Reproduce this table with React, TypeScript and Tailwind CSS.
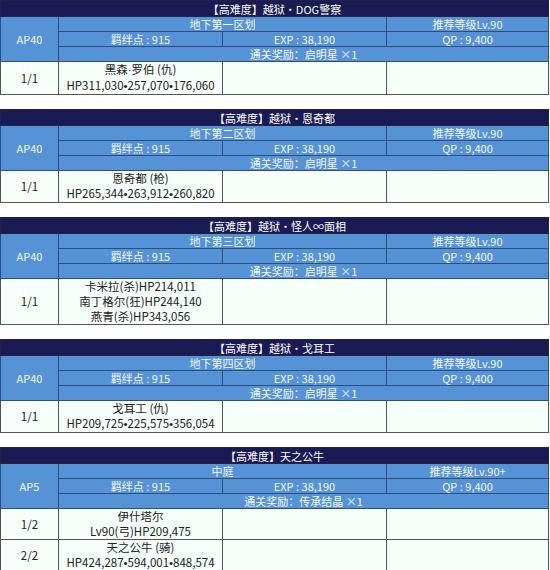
import React from 'react';

type Row = { no: string; lines: string[] };
type Quest = {
  title: string;
  ap: string;
  area: string;
  level: string;
  reward: string;
  rows: Row[];
};

const quests: Quest[] = [
  {
    title: '【高难度】越狱・DOG警察',
    ap: 'AP40',
    area: '地下第一区划',
    level: '推荐等级Lv.90',
    reward: '通关奖励：启明星 ×1',
    rows: [{ no: '1/1', lines: ['黑森·罗伯 (仇)', 'HP311,030•257,070•176,060'] }],
  },
  {
    title: '【高难度】越狱・恩奇都',
    ap: 'AP40',
    area: '地下第二区划',
    level: '推荐等级Lv.90',
    reward: '通关奖励：启明星 ×1',
    rows: [{ no: '1/1', lines: ['恩奇都 (枪)', 'HP265,344•263,912•260,820'] }],
  },
  {
    title: '【高难度】越狱・怪人∞面相',
    ap: 'AP40',
    area: '地下第三区划',
    level: '推荐等级Lv.90',
    reward: '通关奖励：启明星 ×1',
    rows: [
      {
        no: '1/1',
        lines: ['卡米拉(杀)HP214,011', '南丁格尔(狂)HP244,140', '燕青(杀)HP343,056'],
      },
    ],
  },
  {
    title: '【高难度】越狱・戈耳工',
    ap: 'AP40',
    area: '地下第四区划',
    level: '推荐等级Lv.90',
    reward: '通关奖励：启明星 ×1',
    rows: [{ no: '1/1', lines: ['戈耳工 (仇)', 'HP209,725•225,575•356,054'] }],
  },
  {
    title: '【高难度】天之公牛',
    ap: 'AP5',
    area: '中庭',
    level: '推荐等级Lv.90+',
    reward: '通关奖励：传承结晶 ×1',
    rows: [
      { no: '1/2', lines: ['伊什塔尔', 'Lv90(弓)HP209,475'] },
      { no: '2/2', lines: ['天之公牛 (骑)', 'HP424,287•594,001•848,574'] },
    ],
  },
];

const head = 'h-[15px] border border-[#2f4f7a] bg-[#5592d6] p-0 text-center leading-[14px] text-[#f4f8ff]';
const body =
  'border border-[#555555] bg-[#f6fff9] p-0 text-center text-[11.5px] leading-[15px] text-[#222222]';

// bullets and middle dots are narrow in the reference; the CJK font draws them full width
function Line({ text }: { text: string }) {
  const parts = text.split(/([•·])/);
  return (
    <div>
      {parts.map((p, i) =>
        p === '•' || p === '·' ? (
          <span key={i} className="[font-family:'Liberation_Sans',sans-serif]">
            {p}
          </span>
        ) : (
          <React.Fragment key={i}>{p}</React.Fragment>
        ),
      )}
    </div>
  );
}

function QuestTable({ q }: { q: Quest }) {
  return (
    <table className="mb-[14px] w-[549px] table-fixed border-collapse">
      <colgroup>
        <col className="w-[58px]" />
        <col className="w-[164px]" />
        <col className="w-[164px]" />
        <col />
      </colgroup>
      <tbody>
        <tr>
          <td
            colSpan={4}
            className="h-[16px] border border-[#222244] bg-[#1a1a55] p-0 text-center leading-[14px] text-white"
          >
            {q.title}
          </td>
        </tr>
        <tr>
          <td rowSpan={3} className={head}>
            {q.ap}
          </td>
          <td colSpan={2} className={head}>
            {q.area}
          </td>
          <td className={head}>{q.level}</td>
        </tr>
        <tr>
          <td className={head}>羁绊点 : 915</td>
          <td className={head}>EXP : 38,190</td>
          <td className={head}>QP : 9,400</td>
        </tr>
        <tr>
          <td colSpan={3} className={head}>
            {q.reward}
          </td>
        </tr>
        {q.rows.map((r) => (
          <tr key={r.no}>
            <td className={body}>{r.no}</td>
            <td className={body}>
              {r.lines.map((l) => (
                <Line key={l} text={l} />
              ))}
            </td>
            <td className={body} />
            <td className={body} />
          </tr>
        ))}
      </tbody>
    </table>
  );
}

export default function App() {
  return (
    <div className="h-[570px] w-[550px] overflow-hidden bg-white text-[11px] [font-family:'Noto_Sans_CJK_SC','Noto_Sans',sans-serif]">
      {quests.map((q) => (
        <QuestTable key={q.title} q={q} />
      ))}
    </div>
  );
}
